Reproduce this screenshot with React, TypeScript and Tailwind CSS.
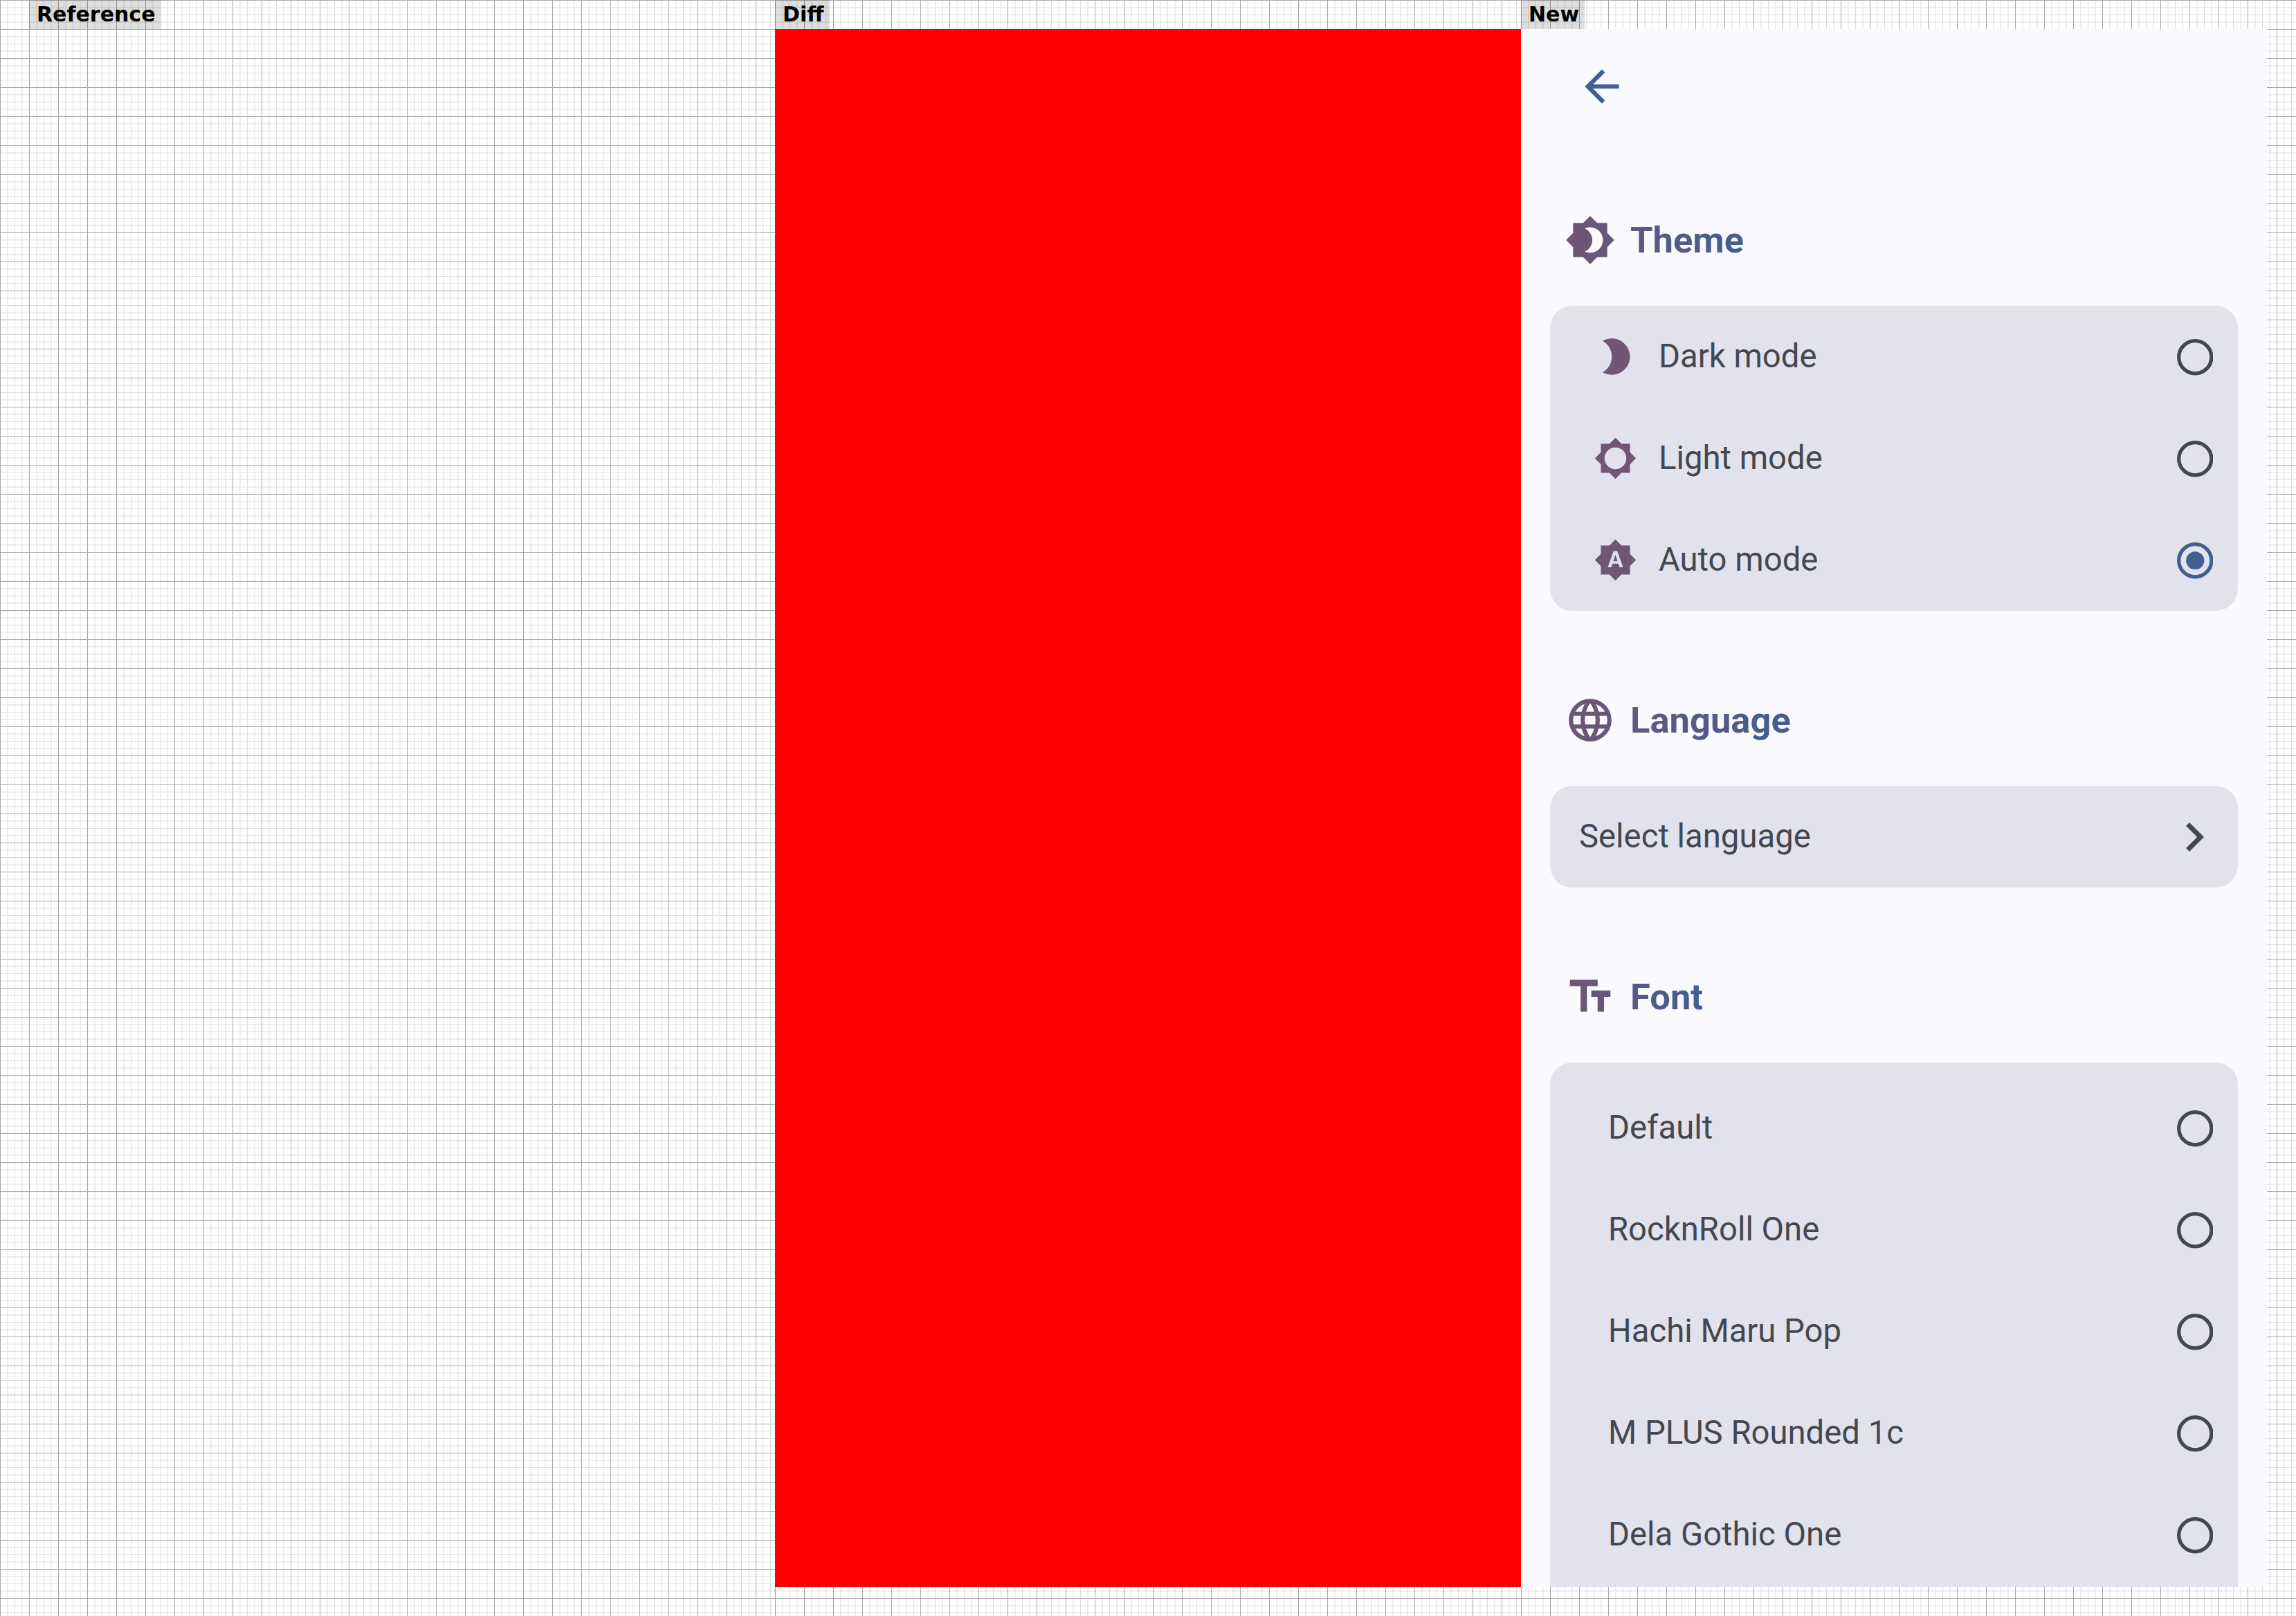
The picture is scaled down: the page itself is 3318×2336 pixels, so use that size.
import type { ReactNode } from "react";

const gridBg =
  "[background-image:linear-gradient(#a8a8a8_1px,transparent_1px),linear-gradient(90deg,#a8a8a8_1px,transparent_1px),linear-gradient(#dcdcdc_1px,transparent_1px),linear-gradient(90deg,#dcdcdc_1px,transparent_1px)] [background-size:42px_42px,42px_42px,10.5px_10.5px,10.5px_10.5px]";

const paths = {
  back: "M20 11H7.83l5.59-5.59L12 4l-8 8 8 8 1.41-1.41L7.83 13H20v-2z",
  brightness4:
    "M20 8.69V4h-4.69L12 .69 8.69 4H4v4.69L.69 12 4 15.31V20h4.69L12 23.31 15.31 20H20v-4.69L23.31 12 20 8.69zM12 18c-.89 0-1.74-.2-2.5-.55C11.56 16.5 13 14.42 13 12s-1.44-4.5-3.5-5.45C10.26 6.2 11.11 6 12 6c3.31 0 6 2.69 6 6s-2.69 6-6 6z",
  moon: "M10 2c-1.82 0-3.53.5-5 1.35C7.99 5.08 10 8.3 10 12s-2.01 6.92-5 8.65C6.47 21.5 8.18 22 10 22c5.52 0 10-4.48 10-10S15.52 2 10 2z",
  sun: "M20 15.31L23.31 12 20 8.69V4h-4.69L12 .69 8.69 4H4v4.69L.69 12 4 15.31V20h4.69L12 23.31 15.31 20H20v-4.69zM12 18c-3.31 0-6-2.69-6-6s2.69-6 6-6 6 2.69 6 6-2.69 6-6 6z",
  auto: "M10.85 12.65h2.3L12 9l-1.15 3.65zM20 8.69V4h-4.69L12 .69 8.69 4H4v4.69L.69 12 4 15.31V20h4.69L12 23.31 15.31 20H20v-4.69L23.31 12 20 8.69zM14.3 16l-.7-2h-3.2l-.7 2H7.8L11 7h2l3.2 9h-1.9z",
  globe:
    "M11.99 2C6.47 2 2 6.48 2 12s4.47 10 9.99 10C17.52 22 22 17.52 22 12S17.52 2 11.99 2zm6.93 6h-2.95c-.32-1.25-.78-2.45-1.38-3.56 1.84.63 3.37 1.91 4.33 3.56zM12 4.04c.83 1.2 1.48 2.53 1.91 3.96h-3.82c.43-1.43 1.08-2.76 1.91-3.96zM4.26 14C4.1 13.36 4 12.69 4 12s.1-1.36.26-2h3.38c-.08.66-.14 1.32-.14 2 0 .68.06 1.34.14 2H4.26zm.82 2h2.95c.32 1.25.78 2.45 1.38 3.56-1.84-.63-3.37-1.9-4.33-3.56zm2.95-8H5.08c.96-1.66 2.49-2.93 4.33-3.56C8.81 5.55 8.35 6.75 8.03 8zM12 19.96c-.83-1.2-1.48-2.53-1.91-3.96h3.82c-.43 1.43-1.08 2.76-1.91 3.96zM14.34 14H9.66c-.09-.66-.16-1.32-.16-2 0-.68.07-1.35.16-2h4.68c.09.65.16 1.32.16 2 0 .68-.07 1.34-.16 2zm.25 5.56c.6-1.11 1.06-2.31 1.38-3.56h2.95c-.96 1.65-2.49 2.93-4.33 3.56zM16.36 14c.08-.66.14-1.32.14-2 0-.68-.06-1.34-.14-2h3.38c.16.64.26 1.31.26 2s-.1 1.36-.26 2h-3.38z",
  textFields: "M2.5 4v3h5v12h3V7h5V4h-13zm19 5h-9v3h3v7h3v-7h3V9z",
  chevron: "M10 6L8.59 7.41 13.17 12l-4.58 4.59L10 18l6-6z",
};

function Label({ children }: { children: ReactNode }) {
  return (
    <div className="h-[42px] w-fit bg-black/[0.13] pl-[11px] pr-[8px] font-['DejaVu_Sans',sans-serif] text-[30px] font-bold leading-[42px] text-black">
      {children}
    </div>
  );
}

function Radio({ selected }: { selected?: boolean }) {
  return (
    <svg viewBox="0 0 52.5 52.5" className="mt-[1.5px] h-[52.5px] w-[52.5px] shrink-0">
      <circle
        cx="26.25"
        cy="26.25"
        r="23.6"
        fill="none"
        strokeWidth="5.25"
        className={selected ? "stroke-[#415f91]" : "stroke-[#44474e]"}
      />
      {selected && <circle cx="26.25" cy="26.25" r="13.1" className="fill-[#415f91]" />}
    </svg>
  );
}

function SectionTitle({
  id,
  icon,
  label,
  iconTo,
  textFrom,
}: {
  id: string;
  icon: string;
  label: string;
  iconTo: string;
  textFrom: string;
}) {
  return (
    <div className="flex h-[74px] items-center gap-[21px] pl-[21px]">
      <svg viewBox="0 0 24 24" className="h-[74px] w-[74px] shrink-0">
        <defs>
          <linearGradient id={id} x1="0" x2="1" y1="0" y2="0">
            <stop offset="0" stopColor="#705575" />
            <stop offset="1" stopColor={iconTo} />
          </linearGradient>
        </defs>
        <path d={icon} fill={`url(#${id})`} />
      </svg>
      <span
        className="bg-clip-text text-[52.5px] font-bold leading-[74px] text-transparent"
        style={{ backgroundImage: `linear-gradient(to right, ${textFrom}, #415f91)` }}
      >
        {label}
      </span>
    </div>
  );
}

function ThemeRow({ icon, label, selected }: { icon: string; label: string; selected?: boolean }) {
  return (
    <div className="flex h-[147px] items-center gap-[31px] pl-[63px] pr-[36px]">
      <svg viewBox="0 0 24 24" className="h-[63px] w-[63px] shrink-0 fill-[#705575]">
        <path d={icon} />
      </svg>
      <span className="flex-1 text-[47.25px] text-[#44474e]">{label}</span>
      <Radio selected={selected} />
    </div>
  );
}

function FontRow({ label }: { label: string }) {
  return (
    <div className="flex h-[147px] items-center pl-[84px] pr-[36px]">
      <span className="flex-1 text-[47.25px] text-[#44474e]">{label}</span>
      <Radio />
    </div>
  );
}

function Settings() {
  return (
    <div className="flex h-[2252px] w-[1078px] flex-col overflow-hidden bg-[#f9f9ff] px-[42px] pt-[46px] font-['Roboto',sans-serif]">
      <svg viewBox="0 0 24 24" className="ml-[38px] h-[74px] w-[74px] shrink-0 fill-[#415f91]">
        <path d={paths.back} />
      </svg>

      <div className="mt-[148px] shrink-0">
        <SectionTitle id="g-theme" icon={paths.brightness4} label="Theme" iconTo="#63587d" textFrom="#5f597f" />
      </div>
      <div className="mt-[58px] shrink-0 rounded-[32px] bg-[#e1e2ec]">
        <ThemeRow icon={paths.moon} label="Dark mode" />
        <ThemeRow icon={paths.sun} label="Light mode" />
        <ThemeRow icon={paths.auto} label="Auto mode" selected />
      </div>

      <div className="mt-[121px] shrink-0">
        <SectionTitle id="g-lang" icon={paths.globe} label="Language" iconTo="#67577a" textFrom="#62587d" />
      </div>
      <div className="mt-[58px] flex h-[147px] shrink-0 items-center rounded-[32px] bg-[#e1e2ec] pl-[42px] pr-[21px]">
        <span className="flex-1 text-[47.25px] text-[#44474e]">Select language</span>
        <svg viewBox="0 0 24 24" className="h-[84px] w-[84px] fill-[#44474e]">
          <path d={paths.chevron} />
        </svg>
      </div>

      <div className="mt-[121px] shrink-0">
        <SectionTitle id="g-font" icon={paths.textFields} label="Font" iconTo="#61587e" textFrom="#595a82" />
      </div>
      <div className="mt-[58px] shrink-0 rounded-t-[32px] bg-[#e1e2ec] pb-[147px] pt-[21px]">
        <FontRow label="Default" />
        <FontRow label="RocknRoll One" />
        <FontRow label="Hachi Maru Pop" />
        <FontRow label="M PLUS Rounded 1c" />
        <FontRow label="Dela Gothic One" />
      </div>
    </div>
  );
}

export default function App() {
  return (
    <div className="flex h-[2336px] w-[3318px] overflow-hidden bg-white">
      <div className={`h-full w-[1120px] pl-[42px] ${gridBg}`}>
        <Label>Reference</Label>
      </div>
      <div className={`h-full w-[1078px] ${gridBg}`}>
        <Label>Diff</Label>
        <div className="h-[2252px] w-[1078px] bg-[#ff0000]" />
      </div>
      <div className={`h-full w-[1120px] ${gridBg}`}>
        <Label>New</Label>
        <Settings />
      </div>
    </div>
  );
}
